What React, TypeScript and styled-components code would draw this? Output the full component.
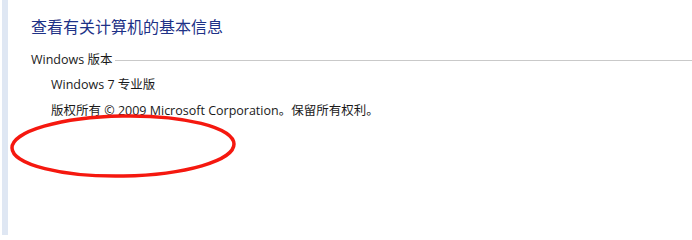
import React from 'react'
import styled, { createGlobalStyle } from 'styled-components'

const GlobalStyle = createGlobalStyle`
  html, body {
    margin: 0;
    padding: 0;
    background: #ffffff;
  }
  body {
    font-family: "Open Sans", "Noto Sans CJK SC", sans-serif;
    color: #1a1a1a;
  }
`

const App = () => {
  return (
    <Page>
      <GlobalStyle />
      <SideStrip />
      <Content>
        <Title>查看有关计算机的基本信息</Title>
        <Section>
          <SectionHeader>
            <SectionLabel>Windows 版本</SectionLabel>
            <Rule />
          </SectionHeader>
          <InfoList>
            <InfoRow>Windows 7 专业版</InfoRow>
            <InfoRow>版权所有 © 2009 Microsoft Corporation。保留所有权利。</InfoRow>
          </InfoList>
          {/* hand-drawn highlight over the screenshot */}
          <Mark viewBox="0 0 240 70" width="240" height="70">
            <ellipse
              cx="115"
              cy="35"
              rx="111"
              ry="30"
              transform="rotate(-1 115 35)"
              fill="none"
              stroke="#f5180f"
              strokeWidth="3.5"
            />
          </Mark>
        </Section>
      </Content>
    </Page>
  )
}

const Page = styled.div`
  display: flex;
  width: 692px;
  height: 235px;
  overflow: hidden;
`

const SideStrip = styled.div`
  width: 6px;
  margin-left: 2px;
  background: #dfe7f3;
  flex-shrink: 0;
`

const Content = styled.div`
  flex: 1;
  padding: 15px 0 0 23px;
`

const Title = styled.h1`
  margin: 0;
  font-size: 16px;
  font-weight: normal;
  line-height: 24px;
  color: #1e3287;
`

const Section = styled.div`
  position: relative;
  margin-top: 8px;
`

const SectionHeader = styled.div`
  display: flex;
  align-items: center;
  gap: 3px;
  height: 22px;
`

const SectionLabel = styled.span`
  font-size: 12.5px;
  white-space: nowrap;
`

const Rule = styled.div`
  flex: 1;
  height: 1px;
  margin-top: 4px;
  background: #c9c9c9;
`

const InfoList = styled.div`
  margin-top: 3px;
  padding-left: 20px;
`

const InfoRow = styled.div`
  font-size: 12.5px;
  line-height: 26px;
  white-space: nowrap;
`

const Mark = styled.svg`
  position: absolute;
  left: -23px;
  top: 64px;
`

export default App
